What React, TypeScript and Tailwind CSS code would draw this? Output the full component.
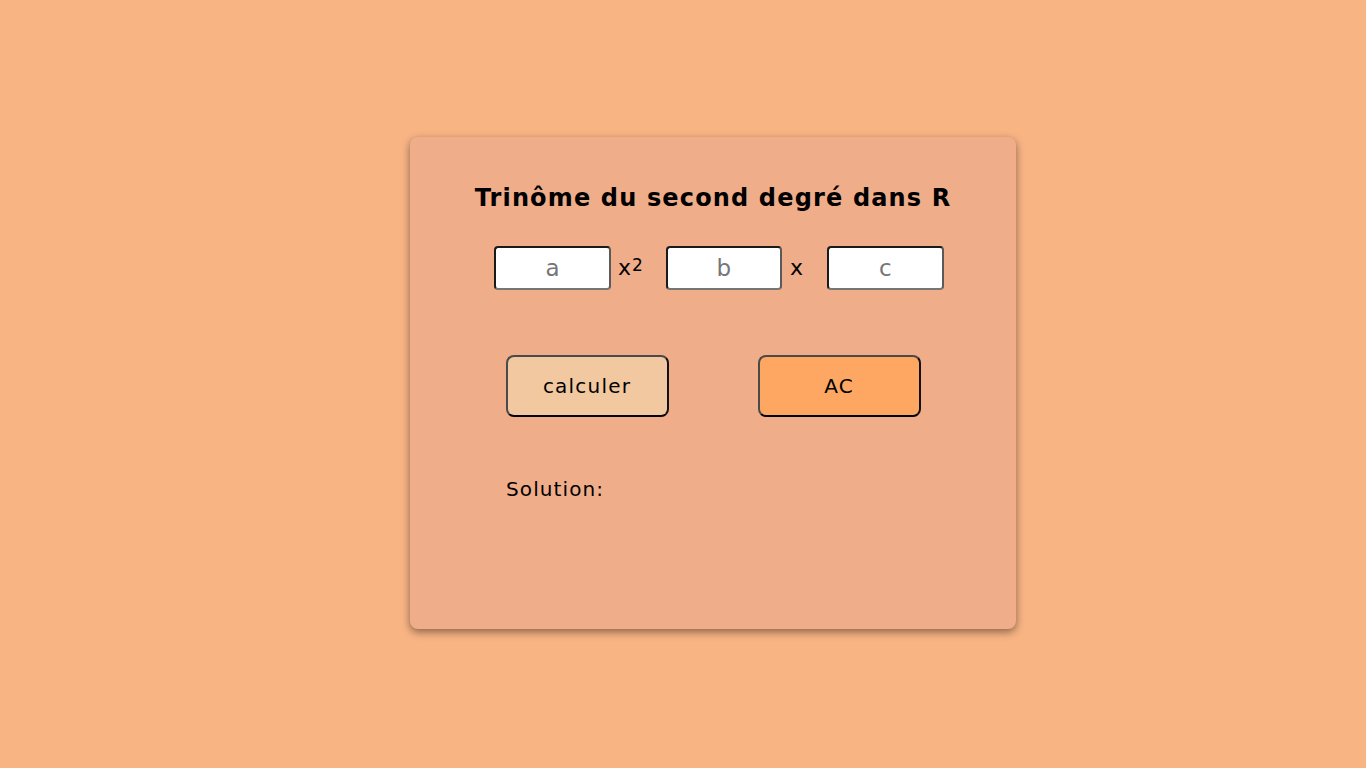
import React from "react";

export default function App() {
  const font = { fontFamily: '"DejaVu Sans", "Noto Sans", sans-serif' };
  const inputCls =
    "h-[44px] bg-white border-2 border-t-[#1a1a1a] border-l-[#1a1a1a] border-r-[#5a5a5a] border-b-[#767676] rounded-[4px] text-center text-[23px] text-black placeholder:text-[#767676] outline-none";
  const btnCls =
    "w-[163px] h-[62px] border-2 border-t-[#4a4a4a] border-l-[#4a4a4a] border-r-[#111] border-b-[#000] rounded-[8px] text-[20px] tracking-[1.2px] text-black";
  return (
    <div className="min-h-screen w-full bg-[#f9b484] flex items-center justify-center pl-[60px] pb-[2px]" style={font}>
      <div className="w-[606px] h-[492px] bg-[#f0ad8a] rounded-[8px] shadow-[0_3px_8px_rgba(0,0,0,0.45)] flex flex-col items-center pt-[43px]">
        <h1 className="text-[24px] leading-[36px] font-bold text-black tracking-[1.15px]">Trinôme du second degré dans R</h1>
        <div className="flex items-center mt-[30px] ml-[12px]">
          <input placeholder="a" className={"w-[117px] " + inputCls} />
          <span className="ml-[7px] text-[22px] leading-none text-black">
            x<sup className="text-[17px] relative -top-[4px] ml-[1px]">2</sup>
          </span>
          <input placeholder="b" className={"ml-[23px] w-[116px] " + inputCls} />
          <span className="ml-[8px] text-[22px] leading-none text-black">x</span>
          <input placeholder="c" className={"ml-[24px] w-[117px] " + inputCls} />
        </div>
        <div className="flex items-center gap-[89px] mt-[65px]">
          <button className={"bg-[#f2c8a0] " + btnCls}>calculer</button>
          <button className={"bg-[#fda762] " + btnCls}>AC</button>
        </div>
        <div className="self-start ml-[96px] mt-[57px] text-[20px] tracking-[1.1px] text-black">Solution:</div>
      </div>
    </div>
  );
}
